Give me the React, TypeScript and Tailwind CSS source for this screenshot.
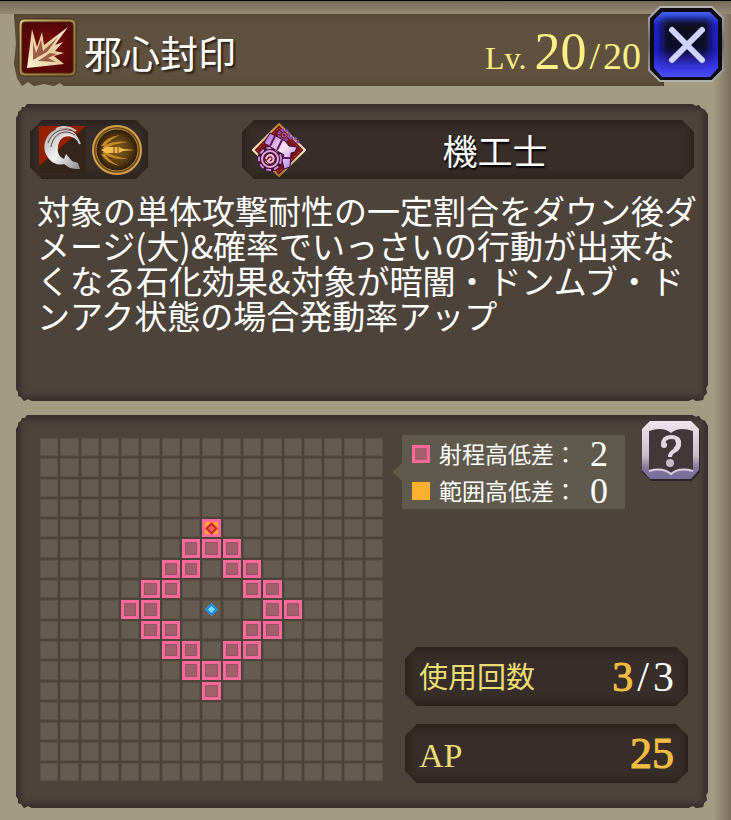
import React from 'react'

const GRID_SIZE = 17
const CENTER = 8

const description = `対象の単体攻撃耐性の一定割合をダウン後ダ
メージ(大)&確率でいっさいの行動が出来な
くなる石化効果&対象が暗闇・ドンムブ・ド
ンアク状態の場合発動率アップ`

const serif = "font-['Liberation_Serif','Noto_Sans_CJK_JP',serif]"

const chamfer =
  '[clip-path:polygon(12px_0,calc(100%-12px)_0,100%_12px,100%_calc(100%-12px),calc(100%-12px)_100%,12px_100%,0_calc(100%-12px),0_12px)]'

// slightly torn corners
const torn =
  '[clip-path:polygon(0_14px,2px_11px,2px_8px,5px_6px,6px_3px,9px_3px,11px_0,calc(100%-16px)_0,calc(100%-12px)_2px,calc(100%-9px)_1px,calc(100%-7px)_4px,calc(100%-3px)_6px,100%_11px,100%_calc(100%-16px),calc(100%-2px)_calc(100%-13px),calc(100%-1px)_calc(100%-8px),calc(100%-4px)_calc(100%-5px),calc(100%-5px)_calc(100%-1px),calc(100%-12px)_100%,calc(100%-15px)_calc(100%-2px),calc(100%-20px)_100%,16px_100%,12px_calc(100%-2px),8px_100%,5px_calc(100%-4px),2px_calc(100%-5px),2px_calc(100%-9px),0_calc(100%-12px))]'

const SkillIcon: React.FC = () => (
  <svg viewBox="0 0 60 60" className="mt-1 h-[60px] w-[60px] shrink-0 self-start" aria-hidden="true">
    <defs>
      <linearGradient id="skillFrame" x1="0" y1="0" x2="1" y2="1">
        <stop offset="0" stopColor="#d9c279" />
        <stop offset="0.5" stopColor="#a58a4c" />
        <stop offset="1" stopColor="#8e6e38" />
      </linearGradient>
      <radialGradient id="skillRed">
        <stop offset="0" stopColor="#860b0b" />
        <stop offset="1" stopColor="#560707" />
      </radialGradient>
      <linearGradient id="skillBurst" x1="0" y1="1" x2="1" y2="0">
        <stop offset="0" stopColor="#fff6cf" />
        <stop offset="0.5" stopColor="#e3cb9a" />
        <stop offset="1" stopColor="#fff3da" />
      </linearGradient>
    </defs>
    <rect x="1" y="1" width="57" height="57" rx="5" fill="url(#skillFrame)" stroke="#3e2d19" />
    <rect x="4" y="4" width="51" height="51" rx="3" fill="url(#skillRed)" stroke="#4b2312" />
    <path d="M9 50 L14 11 L19 29 L24 14 L26 27 L50 9 L37 27 L45 24 L37 33 L46 35 L36 38 L46 46 Z" fill="url(#skillBurst)" />
    <path d="M15 42 L15 24 L18 35 L23 22 L25 33 L40 19 L29 34 Z M20 43 L32 35 L39 36 L30 40 L38 44 Z" fill="#7a2a1c" opacity="0.7" />
  </svg>
)

const SlashIcon: React.FC = () => (
  <svg viewBox="0 0 47 47" className="h-[47px] w-[47px]" role="img" aria-label="斬撃">
    <defs>
      <linearGradient id="slashMetal" x1="0" y1="0" x2="1" y2="1">
        <stop offset="0" stopColor="#a5a5a8" />
        <stop offset="0.5" stopColor="#f4f4f4" />
        <stop offset="1" stopColor="#8a8a8d" />
      </linearGradient>
    </defs>
    <rect width="47" height="47" fill="#34251a" />
    <path d="M0 0 H47 L0 40 Z" fill="#952000" />
    <path d="M41 18 C39 8 31 0 18 3 C7 7 2 20 8 30 C12 37 19 40 25 38 L31 42 L37 43 L41 43 L39 37 L33 35 L27 28 L25 33 C20 31 18 26 19 21 C20 9 33 6 41 18 Z" fill="url(#slashMetal)" />
    <path d="M37 5 C30 0 22 0 17 3 M41 18 C36 5 24 4 18 11" stroke="#c9c9cb" strokeWidth="2" fill="none" />
    <path d="M36 9 C25 2 14 8 12 21 M33 5 C22 1 12 7 9 17" stroke="#5d4038" strokeWidth="1" fill="none" />
  </svg>
)

const BulletIcon: React.FC = () => (
  <svg viewBox="0 0 50 50" className="h-[50px] w-[50px]" role="img" aria-label="銃撃">
    <defs>
      <radialGradient id="coin">
        <stop offset="0" stopColor="#8a5a16" />
        <stop offset="0.6" stopColor="#5c3d12" />
        <stop offset="1" stopColor="#2a1c0b" />
      </radialGradient>
    </defs>
    <circle cx="25" cy="25" r="24" fill="#6e4a17" stroke="#d3a04a" strokeWidth="2" />
    <circle cx="25" cy="25" r="21" fill="url(#coin)" stroke="#b98734" strokeWidth="1" />
    <path d="M9 21 Q14 12 28 10 Q17 15 13 21 Z M10 23 Q18 15 36 17 Q20 19 15 23 Z M9 29 Q14 38 28 41 Q17 36 13 29 Z M10 27 Q18 35 36 34 Q20 31 15 27 Z" fill="#c58a2a" />
    <path d="M9 25 L14 22 H27 L31 24 L43 25 L31 26 L27 28 H14 Z" fill="#f2bd4c" />
    <path d="M22 22 V28 M26 22 V28" stroke="#6b4310" strokeWidth="1" />
  </svg>
)

const JobIcon: React.FC = () => (
  <svg viewBox="0 0 54 54" className="h-[54px] w-[54px] shrink-0" aria-hidden="true">
    <defs>
      <linearGradient id="jobFrame" x1="0" y1="0" x2="0" y2="1">
        <stop offset="0" stopColor="#b9812f" />
        <stop offset="0.5" stopColor="#fff0cf" />
        <stop offset="1" stopColor="#a8702a" />
      </linearGradient>
      <linearGradient id="jobMetal" x1="0" y1="0" x2="1" y2="1">
        <stop offset="0" stopColor="#a05bd0" />
        <stop offset="0.5" stopColor="#ffe3f3" />
        <stop offset="1" stopColor="#9c6cf0" />
      </linearGradient>
    </defs>
    <path d="M27 1 L53 27 L27 53 L1 27 Z" fill="#7a1216" stroke="url(#jobFrame)" strokeWidth="2" />
    <path d="M27 5 L49 27 L27 49 L5 27 Z" fill="none" stroke="#b5563a" strokeDasharray="1 1" />
    <g fill="none" stroke="#c58bdc">
      <circle cx="18" cy="36" r="9" stroke="#42103c" strokeWidth="7" />
      <circle cx="18" cy="36" r="11" strokeWidth="2" strokeDasharray="5 3" />
      <circle cx="18" cy="36" r="8" stroke="#e6a6d6" strokeWidth="2" />
      <path d="M14 36 Q15 32 19 32 Q23 34 21 38 Q18 41 16 38 L19 35" stroke="#f0c4e4" strokeWidth="2" />
      <circle cx="32" cy="12" r="5" stroke="#8b4ba8" strokeWidth="3" strokeDasharray="3 1" />
      <circle cx="32" cy="12" r="2" stroke="#a66cc0" />
      <path d="M38 15 Q46 14 46 21" stroke="#8b4ba8" strokeWidth="3" strokeDasharray="3 1" />
    </g>
    <path d="M18 10 L33 18 L37 23 L45 24 L43 29 L39 30 L38 44 L32 46 L30 37 L32 32 L12 20 Z" fill="url(#jobMetal)" stroke="#3b0b38" />
    <path d="M23 13 L18 23 M30 17 L25 27 M31 35 L38 35" stroke="#5b1d62" strokeWidth="2" />
  </svg>
)

const CloseButton: React.FC = () => (
  <button type="button" aria-label="閉じる" className="relative -ml-4 h-[76px] w-[76px] shrink-0">
    <svg viewBox="0 0 76 76" className="h-full w-full" aria-hidden="true">
      <defs>
        <linearGradient id="closeRim" x1="0" y1="0" x2="0" y2="1">
          <stop offset="0" stopColor="#b4b4b4" />
          <stop offset="0.5" stopColor="#66666c" />
          <stop offset="1" stopColor="#adb3ac" />
        </linearGradient>
        <linearGradient id="closeBlue" x1="0" y1="0" x2="0" y2="1">
          <stop offset="0" stopColor="#4460ee" />
          <stop offset="0.2" stopColor="#2024c4" />
          <stop offset="0.6" stopColor="#1d1fc0" />
          <stop offset="1" stopColor="#4a4cff" />
        </linearGradient>
        <linearGradient id="closeDark" x1="0" y1="0" x2="0" y2="1">
          <stop offset="0" stopColor="#10081c" />
          <stop offset="0.6" stopColor="#110a2a" />
          <stop offset="1" stopColor="#2a1fb0" stopOpacity="0" />
        </linearGradient>
        <filter id="closeSoft" x="-20%" y="-20%" width="140%" height="140%">
          <feGaussianBlur stdDeviation="3" />
        </filter>
      </defs>
      <path d="M12 1 H64 L75 12 V64 L64 75 H12 L1 64 V12 Z" fill="#0d0a14" stroke="url(#closeRim)" strokeWidth="2" />
      <path d="M14 6 H62 L70 14 V62 L62 71 H14 L6 62 V14 Z" fill="url(#closeBlue)" />
      <rect x="14" y="14" width="48" height="50" fill="url(#closeDark)" filter="url(#closeSoft)" />
      <path d="M24 24 L54 54 M54 24 L24 54" stroke="#d0d2ff" strokeWidth="6" strokeLinecap="round" />
    </svg>
  </button>
)

const HelpButton: React.FC = () => (
  <button type="button" aria-label="ヘルプ" className="h-[61px] w-[60px] shrink-0">
    <svg viewBox="0 0 60 61" className="h-full w-full" aria-hidden="true">
      <defs>
        <linearGradient id="helpRim" x1="0" y1="0" x2="0" y2="1">
          <stop offset="0" stopColor="#f1e6ef" />
          <stop offset="0.6" stopColor="#c9bdca" />
          <stop offset="0.8" stopColor="#83799b" />
          <stop offset="1" stopColor="#756c9a" />
        </linearGradient>
      </defs>
      <path d="M10 2 H51 L59 10 V51 L51 60 H10 L1 51 V10 Z" fill="#2a2428" />
      <path d="M9 0 H50 L58 8 V49 L50 58 H9 L1 49 V8 Z" fill="url(#helpRim)" />
      <path d="M8 10 Q22 5 30 12 Q38 5 52 10 V50 Q38 46 30 53 Q22 46 8 50 Z" fill="#43373a" />
      <path d="M8 50 Q22 46 30 53 Q38 46 52 50" fill="none" stroke="#dcd2dc" strokeWidth="2" />
      <path d="M22 24 Q22 16 30 16 Q39 16 38 24 Q37 28 33 30 Q29 32 29 36" fill="none" stroke="#e2d6e0" strokeWidth="4" />
      <path d="M36 18 Q40 24 34 29" fill="none" stroke="#e2d6e0" strokeWidth="5" />
      <circle cx="23" cy="24" r="3" fill="#e2d6e0" />
      <circle cx="29" cy="42" r="4" fill="#c5bac6" />
    </svg>
  </button>
)

const Cell: React.FC<{ row: number; col: number }> = ({ row, col }) => {
  const distance = Math.abs(row - CENTER) + Math.abs(col - CENTER)

  if (row === CENTER - 4 && col === CENTER) {
    return (
      <div className="flex items-center justify-center border-3 border-[#ff6899] bg-[#ffa62b]">
        <div className="h-[9px] w-[9px] shrink-0 rotate-45 border-2 border-[#cf2429] bg-[#f25a5c]" />
      </div>
    )
  }
  if (distance === 3 || distance === 4) {
    return (
      <div className="border-3 border-[#ff6899] bg-[#a1606c] shadow-[inset_0_0_0_1px_#8d5863]" />
    )
  }
  return (
    <div className="flex items-center justify-center border border-[#5a5246] bg-[#645c50]">
      {distance === 0 && <div className="h-[9px] w-[9px] shrink-0 rotate-45 border-2 border-[#178cf0] bg-[#6fe0ff]" />}
    </div>
  )
}

const RangeGrid: React.FC = () => {
  const cells = Array.from({ length: GRID_SIZE * GRID_SIZE }, (_, i) => i)
  return (
    <div className="mt-[23px] mb-[27px] grid aspect-square min-w-0 flex-1 grid-cols-[repeat(17,minmax(0,1fr))] grid-rows-[repeat(17,minmax(0,1fr))] gap-[2px]">
      {cells.map((i) => (
        <Cell key={i} row={Math.floor(i / GRID_SIZE)} col={i % GRID_SIZE} />
      ))}
    </div>
  )
}

const Panel: React.FC<{ className: string; children: React.ReactNode }> = ({ className, children }) => (
  <section className={`bg-[#4c433b] shadow-[inset_0_0_5px_5px_#3a3030] ${torn} ${className}`}>{children}</section>
)

const Slot: React.FC<{ className: string; children: React.ReactNode }> = ({ className, children }) => (
  <div className={`flex h-[59px] items-center bg-[#372e2a] shadow-[inset_0_0_10px_2px_#261b17] ${chamfer} ${className}`}>
    {children}
  </div>
)

const LegendRow: React.FC<{ swatch: string; label: string; value: number }> = ({ swatch, label, value }) => (
  <div className="flex h-[37px] items-center">
    <span className={`mr-[9px] h-[18px] w-[18px] ${swatch}`} />
    <dt className="text-[23px]">{label}：</dt>
    <dd className={`flex-1 pr-1 text-center text-[36px] leading-none ${serif}`}>{value}</dd>
  </div>
)

const App: React.FC = () => {
  return (
    <div className="min-h-screen bg-[#a39b82] bg-[linear-gradient(to_left,#7b705b,#a39b82_18px)] font-['Noto_Sans_CJK_JP',sans-serif] text-white">
      <header className="flex items-start border-t border-black bg-[linear-gradient(to_bottom,#756a57,#958b74_13px,transparent_13px)] pt-[5px] pr-[7px] pl-[14px]">
        <div className="mt-2 flex h-[72px] min-w-0 flex-1 items-center bg-[#5f513e] pr-[23px] pl-1 shadow-[inset_0_0_8px_#4c3d27] [clip-path:polygon(0_0,100%_0,100%_100%,50px_100%,46px_calc(100%-3px),40px_100%,30px_calc(100%-2px),20px_100%,14px_calc(100%-4px),8px_100%,3px_calc(100%-8px),0_calc(100%-22px),2px_30px)]">
          <SkillIcon />
          <h1 className="ml-[6px] flex-1 pt-1 text-[38px] leading-none whitespace-nowrap [text-shadow:2px_2px_2px_#2a2118]">邪心封印</h1>
          <p className={`flex items-baseline pt-1 leading-none whitespace-nowrap text-[#ffee83] ${serif}`}>
            <span className="mr-2 text-[32px]">Lv.</span>
            <span className="text-[52px]">20</span>
            <span className="mx-[3px] text-[38px]">/</span>
            <span className="text-[38px]">20</span>
          </p>
        </div>
        <CloseButton />
      </header>

      <main className="flex flex-col gap-[14px] pt-[18px] pr-[23px] pb-3 pl-4">
        <Panel className="min-h-[297px] px-[14px] pt-4">
          <div className="flex justify-between">
            <Slot className="w-[118px] gap-[6px] pl-[9px]">
              <SlashIcon />
              <BulletIcon />
            </Slot>
            <Slot className="w-[452px] pl-[10px]">
              <JobIcon />
              <h2 className="flex-1 pr-[10px] text-center text-[35px] leading-none [text-shadow:1px_2px_2px_#000]">機工士</h2>
            </Slot>
          </div>
          <p className="mt-[14px] pl-[7px] text-[33px] leading-[35px] whitespace-pre">{description}</p>
        </Panel>

        <Panel className="flex gap-[19px] pr-[7px] pl-6">
          <RangeGrid />
          <div className="flex w-[299px] shrink-0 flex-col justify-between pt-[6px] pb-[25px]">
            <div className="flex items-start justify-between">
              <dl className="relative mt-[14px] w-[223px] bg-[#605a4d] pl-[10px]">
                <span className="absolute top-[28px] -left-[10px] h-[18px] w-[10px] bg-[#605a4d] [clip-path:polygon(100%_0,0_50%,100%_100%)]" />
                <LegendRow swatch="border-3 border-[#ff6899] bg-[#a1606c]" label="射程高低差" value={2} />
                <LegendRow swatch="bg-[#ffb02e]" label="範囲高低差" value={0} />
              </dl>
              <HelpButton />
            </div>
            <div className={`mr-[13px] ml-[3px] flex flex-col gap-[18px] ${serif}`}>
              <Slot className="justify-between px-[14px]">
                <span className="pt-1 text-[29px] text-[#ecdc74]">使用回数</span>
                <span className="flex gap-1 text-[42px] leading-none">
                  <span className="text-[#f3bd42] [-webkit-text-stroke:1px]">3</span>
                  <span>/</span>
                  <span>3</span>
                </span>
              </Slot>
              <Slot className="justify-between px-[14px]">
                <span className="pt-1 text-[34px] text-[#ecdc74]">AP</span>
                <span className="text-[44px] leading-none text-[#f3bd42] [-webkit-text-stroke:1px]">25</span>
              </Slot>
            </div>
          </div>
        </Panel>
      </main>
    </div>
  )
}

export default App
